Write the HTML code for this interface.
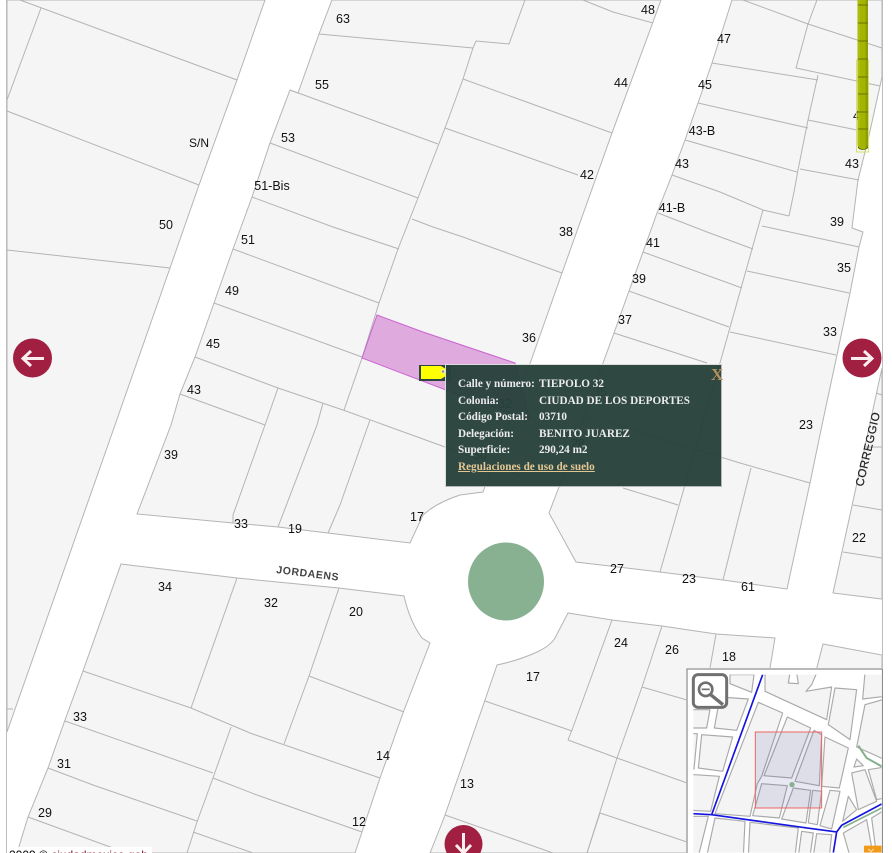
<!DOCTYPE html>
<html lang="es">
<head>
<meta charset="utf-8">
<title>Mapa</title>
<style>
html,body{margin:0;padding:0;background:#fff;width:892px;height:853px;overflow:hidden}
#wrap{position:relative;width:892px;height:853px;overflow:hidden;font-family:"Liberation Sans",sans-serif;filter:blur(.3px)}
svg{position:absolute;left:0;top:0}
.p{fill:#f5f5f5;stroke:#b4b4b4;stroke-width:1}
.l{fill:none;stroke:#b4b4b4;stroke-width:1}
.n{font:12.5px "Liberation Sans",sans-serif;fill:#111;text-anchor:middle}
#panel{position:absolute;left:446px;top:365px;width:275px;height:121px;background:#27413b;border:1px solid #b5b5b5;border-left-color:#ddd;border-top-color:#ddd;opacity:.96;box-sizing:content-box;margin:-1px 0 0 -1px;font:bold 11.2px/16.6px "Liberation Serif",serif;color:#ececec}
#panel div.r{position:absolute;left:12px;white-space:nowrap}
#panel div.v{position:absolute;left:93px;white-space:nowrap}
#panel a{position:absolute;left:12px;top:94px;color:#e2c690;text-decoration:underline;white-space:nowrap}
#x{position:absolute;left:265px;top:1px;font:bold 17px/17px "Liberation Serif",serif;color:#b18d56}
#copy{position:absolute;left:7px;top:847px;width:145px;height:6px;background:#fff;overflow:hidden;font:12px/12px "Liberation Sans",sans-serif;color:#000;white-space:nowrap}
#copy span{position:relative;top:2px;left:2px}
#copy i{font-style:normal;color:#7a0f20}
</style>
</head>
<body>
<div id="wrap">
<svg width="892" height="853" viewBox="0 0 892 853">
<rect x="0" y="0" width="892" height="853" fill="#fff"/>
<!-- block A -->
<polygon class="p" points="7,0 265,0 237,80 199,185 170,268 115,425 7,732"/>
<polyline class="l" points="20,0 237,80"/>
<polyline class="l" points="41,8 7,100"/>
<polyline class="l" points="7,111 199,185"/>
<polyline class="l" points="7,250 170,268"/>
<polyline class="l" points="7,709 13,709"/>
<!-- block B -->
<path class="p" d="M332,0 L319,34 298,93 290,90 270,143 252,197 233,249 214,303 195,357 180,394 171,425 137,514 233,523 278,527 328,533 410,543 423,515 Q436,503 460,495 L483,492 532,358 562,273 612,133 653,22 661,0Z"/>
<polyline class="l" points="319,34 473,48"/>
<polyline class="l" points="476,41 509,44 525,0"/>
<polyline class="l" points="473,48 476,41"/>
<polyline class="l" points="583,0 613,12 653,23"/>
<polyline class="l" points="473,48 463,79 445,128 418,198 398,249 379,303 362,358 344,410"/>
<polyline class="l" points="290,90 438,144"/>
<polyline class="l" points="270,143 418,198"/>
<polyline class="l" points="252,197 333,227 399,249"/>
<polyline class="l" points="233,249 379,303"/>
<polyline class="l" points="214,303 362,357"/>
<polyline class="l" points="195,357 278,388 343,410 445,447 530,479"/>
<polyline class="l" points="180,394 265,425"/>
<polyline class="l" points="278,388 265,425 233,515 233,523"/>
<polyline class="l" points="323,403 317,425 278,527"/>
<polyline class="l" points="370,420 340,505 328,533"/>
<polyline class="l" points="412,219 433,227 463,237 562,273"/>
<polyline class="l" points="445,128 578,175"/>
<polyline class="l" points="463,79 557,113 612,133"/>
<!-- block C -->
<polygon class="p" points="732,0 712,63 698,103 685,140 672,175 657,213 643,252 629,291 614,333 603,363 559,487 549,513 576,562 660,572 723,580 787,589 810,483 822,425 837,355 850,293 859,247 863,232 852,228 858,180 868,140 880,86 882,77 882,0"/>
<polyline class="l" points="743,0 808,24 882,48"/>
<polyline class="l" points="817,0 808,24 796,68 880,86"/>
<polyline class="l" points="712,63 818,80"/>
<polyline class="l" points="818,75 808,120 798,170 794,192 789,216"/>
<polyline class="l" points="698,103 808,128"/>
<polyline class="l" points="808,120 857,130"/>
<polyline class="l" points="685,140 797,172"/>
<polyline class="l" points="800,169 859,180"/>
<polyline class="l" points="672,175 720,192 763,210 789,216"/>
<polyline class="l" points="763,210 720,363 660,572"/>
<polyline class="l" points="762,226 859,247"/>
<polyline class="l" points="658,213 707,232 753,249"/>
<polyline class="l" points="643,252 742,288"/>
<polyline class="l" points="747,271 849,293"/>
<polyline class="l" points="629,291 729,327"/>
<polyline class="l" points="730,332 836,355"/>
<polyline class="l" points="614,333 707,363"/>
<polyline class="l" points="751,468 723,580"/>
<polyline class="l" points="583,415 740,463 810,483"/>
<polyline class="l" points="623,488 678,505"/>
<!-- far right -->
<polygon class="p" points="882,368 833,593 882,599"/>
<polyline class="l" points="876,393 882,395"/>
<polyline class="l" points="865,447 882,447"/>
<polyline class="l" points="853,505 882,510"/>
<polyline class="l" points="843,552 882,558"/>
<polygon class="p" points="823,644 882,655 882,675 815,675"/>
<!-- block D -->
<path class="p" d="M121,564 L237,578 339,588 404,596 Q410,622 422,638 L430,643 403,713 380,778 362,832 355,853 17,853 28,817 48,768 65,720 83,671Z"/>
<polyline class="l" points="237,578 191,708"/>
<polyline class="l" points="339,588 309,676 284,744"/>
<polyline class="l" points="309,676 404,712"/>
<polyline class="l" points="83,671 191,708 250,733 380,778"/>
<polyline class="l" points="65,721 213,773"/>
<polyline class="l" points="231,727 213,778 197,822 187,853"/>
<polyline class="l" points="213,778 257,795 362,832"/>
<polyline class="l" points="48,768 93,785 197,821"/>
<polyline class="l" points="28,817 113,848 125,853"/>
<polyline class="l" points="193,832 253,853"/>
<!-- block E -->
<path class="p" d="M568,613 L612,620 662,626 716,634 775,638 770,668 770,853 430,853 440,828 445,815 485,700 497,665 Q520,660 537,652 Q550,646 555,638Z"/>
<polyline class="l" points="612,620 572,730 568,740"/>
<polyline class="l" points="662,626 642,687 617,758 587,853"/>
<polyline class="l" points="716,634 710,668"/>
<polyline class="l" points="642,687 687,700"/>
<polyline class="l" points="485,701 572,731"/>
<polyline class="l" points="568,740 617,758 687,783"/>
<polyline class="l" points="445,815 553,853"/>
<polyline class="l" points="600,813 687,842"/>
<polyline class="l" points="600,813 587,853"/>
<!-- selected parcel -->
<polygon points="377,315 423,332 515,363 530,420 446,390 362,358" fill="#dfaadd" stroke="#c963d2" stroke-width="1"/>
<!-- roundabout -->
<ellipse cx="506" cy="581.5" rx="38" ry="39" fill="#87b191"/>
<!-- labels -->
<g class="n">
<text x="343" y="23">63</text><text x="648" y="14">48</text><text x="724" y="43">47</text>
<text x="621" y="87">44</text><text x="705" y="89">45</text><text x="322" y="89">55</text>
<text x="288" y="142">53</text><text x="199" y="147" style="font-size:12px">S/N</text><text x="702" y="135">43-B</text>
<text x="682" y="168">43</text><text x="852" y="168">43</text><text x="587" y="179">42</text>
<text x="272" y="190">51-Bis</text><text x="672" y="212">41-B</text><text x="166" y="229">50</text>
<text x="566" y="236">38</text><text x="837" y="226">39</text><text x="248" y="244">51</text>
<text x="653" y="247">41</text><text x="844" y="272">35</text><text x="639" y="283">39</text>
<text x="232" y="295">49</text><text x="625" y="324">37</text><text x="529" y="342">36</text>
<text x="830" y="336">33</text><text x="213" y="348">45</text><text x="194" y="394">43</text>
<text x="806" y="429">23</text><text x="171" y="459">39</text><text x="417" y="521">17</text>
<text x="241" y="528">33</text><text x="295" y="533">19</text><text x="859" y="542">22</text>
<text x="617" y="573">27</text><text x="689" y="583">23</text><text x="748" y="591">61</text>
<text x="165" y="591">34</text><text x="271" y="607">32</text><text x="356" y="616">20</text>
<text x="621" y="647">24</text><text x="672" y="654">26</text><text x="729" y="661">18</text>
<text x="533" y="681">17</text><text x="80" y="721">33</text><text x="383" y="760">14</text>
<text x="64" y="768">31</text><text x="467" y="788">13</text><text x="45" y="817">29</text>
<text x="359" y="826">12</text><text x="860" y="120">43</text>
<text x="505" y="408">32</text><text x="600" y="396">35</text><text x="480" y="459">30</text><text x="578" y="448">28</text>
</g>
<text transform="translate(276,573) rotate(7)" style="font:bold 10.5px 'Liberation Sans',sans-serif;fill:#444;letter-spacing:.6px">JORDAENS</text>
<text transform="translate(863,487) rotate(-77)" style="font:11.5px 'Liberation Sans',sans-serif;fill:#222;letter-spacing:.5px;stroke:#222;stroke-width:.2">CORREGGIO</text>
<!-- border lines -->
<line x1="6.5" y1="0" x2="6.5" y2="853" stroke="#bdbdbd"/>
<line x1="882.5" y1="0" x2="882.5" y2="853" stroke="#bdbdbd"/>
<!-- yellow bar -->
<rect x="856.5" y="60" width="12" height="92" fill="none" stroke="#cfe04a" stroke-width=".8"/>
<path d="M857.5 0H868V144Q868 150 862.700 150Q857.5 150 857.5 144Z" fill="#a3b500"/>
<rect x="858" y="0" width="2" height="148" fill="#aebd14"/>
<rect x="865.5" y="0" width="2.5" height="148" fill="#8d9e06"/>
<path d="M858 5H868M858 23H868M858 41H868M858 59H868M858 77H868M858 94H868M858 112H868M858 129H868" stroke="#66720a" stroke-width="1"/>
<path d="M858 146Q862.700 153 868 146V148Q862.700 152 858 148Z" fill="#5f6b00"/>
<!-- nav buttons -->
<g>
<circle cx="32.5" cy="358" r="19.5" fill="#a11f40"/>
<path d="M44 358.5H24M31 351L23 358.5L31 366" fill="none" stroke="#fbeef0" stroke-width="3"/>
<circle cx="862" cy="358" r="19.5" fill="#a11f40"/>
<path d="M851 358.5H871M864 351L872 358.5L864 366" fill="none" stroke="#fbeef0" stroke-width="3"/>
<circle cx="463.5" cy="844" r="19" fill="#a11f40"/>
<path d="M463.5 833V853M456 845L463.5 853L471 845" fill="none" stroke="#fbeef0" stroke-width="3"/>
</g>
<!-- tag -->
<rect x="419" y="365" width="32" height="16" fill="#2b4640"/>
<path d="M421 366H441L446 369V376L441 379H421Z" fill="#ffff00"/>
<circle cx="443" cy="371.5" r="1.6" fill="#889" stroke="#fff" stroke-width=".6"/>
</svg>

<div id="panel">
<div class="r" style="top:11px">Calle y número:</div><div class="v" style="top:11px">TIEPOLO 32</div>
<div class="r" style="top:27.5px">Colonia:</div><div class="v" style="top:27.5px">CIUDAD DE LOS DEPORTES</div>
<div class="r" style="top:44px">Código Postal:</div><div class="v" style="top:44px">03710</div>
<div class="r" style="top:61px">Delegación:</div><div class="v" style="top:61px">BENITO JUAREZ</div>
<div class="r" style="top:77px">Superficie:</div><div class="v" style="top:77px">290,24 m2</div>
<a>Regulaciones de uso de suelo</a>
<div id="x">X</div>
</div>

<div id="copy"><span>2009 © <i>ciudadmexico.gob.mx</i></span></div>

<!-- minimap -->
<svg width="197" height="185" viewBox="0 0 197 185" style="left:686px;top:668px">
<rect x="0" y="0" width="197" height="185" fill="#fff"/>
<rect x="1" y="1" width="195.500" height="190" fill="none" stroke="#8a8a8a" stroke-width="1.200"/>
<g transform="translate(-6,-8.330) scale(.3333)">
<clipPath id="mc"><rect x="40" y="45" width="565" height="534"/></clipPath>
<g clip-path="url(#mc)">
<rect x="40" y="45" width="565" height="534" fill="#fff"/>
<g fill="#f4f4f4" stroke="#aaa" stroke-width="3.500" stroke-linejoin="round">
<polygon points="150,45 222,45 215,98 150,72"/>
<polygon points="120,112 205,118 170,212 103,205"/>
<polygon points="65,225 158,232 128,335 55,325"/>
<polygon points="30,150 90,150 80,205 30,205"/>
<polygon points="30,222 52,222 42,328 30,328"/>
<polygon points="45,345 118,350 92,455 30,452 30,345"/>
<polygon points="235,128 308,160 245,350 232,372 210,470 105,462"/>
<polygon points="322,172 392,205 335,355 252,348"/>
<polygon points="402,212 425,225 418,378 345,365"/>
<polygon points="435,232 505,265 478,385 425,380"/>
<polygon points="245,372 322,378 298,475 218,468"/>
<polygon points="340,385 392,392 378,490 305,478"/>
<polygon points="398,392 425,395 412,495 385,490"/>
<polygon points="450,392 480,395 455,508 420,498"/>
<polygon points="30,470 85,470 55,590 30,590"/>
<polygon points="105,475 195,485 190,590 80,590"/>
<polygon points="210,488 355,505 345,590 205,590"/>
<polygon points="365,515 400,520 390,590 355,590"/>
<polygon points="410,522 455,525 448,590 400,590"/>
<polygon points="255,40 330,40 325,70 355,72 350,40 410,40 395,75 378,95 455,82 440,180 255,95"/>
<polygon points="465,85 530,90 510,240 445,195"/>
<polygon points="555,40 615,40 615,110 548,118"/>
<polygon points="555,135 615,118 615,300 530,262"/>
<polygon points="530,298 550,318 522,322"/>
<polygon points="515,340 555,330 590,425 535,450"/>
<polygon points="505,410 530,450 488,485"/>
<polygon points="565,330 615,322 615,415 590,420"/>
<polygon points="490,520 560,480 580,590 510,590"/>
<polygon points="575,475 615,450 615,590 590,590"/>
</g>
<path d="M535 258L560 295L605 320" fill="none" stroke="#86b08c" stroke-width="6"/>
<path d="M490 503L605 445" fill="none" stroke="#86b08c" stroke-width="5"/>
<path d="M248 45L95 465M40 462L95 465L380 505L470 517L460 579M470 517L485 497L605 433" fill="none" stroke="#1515e0" stroke-width="5"/>
<rect x="226" y="217" width="199" height="228" fill="#5c5ca0" fill-opacity=".14" stroke="#f06464" stroke-width="3"/>
<circle cx="336" cy="375" r="8" fill="#87b191"/>
<rect x="552" y="558" width="53" height="21" fill="#f09a17"/>
<path d="M565 568l8 8 8-8" fill="none" stroke="#fbe0b0" stroke-width="3"/>
</g>
<rect x="40" y="45" width="100" height="98" rx="14" fill="#fff" fill-opacity=".9" stroke="#707070" stroke-width="9"/>
<circle cx="77" cy="89" r="20" fill="none" stroke="#707070" stroke-width="8"/>
<path d="M65 89H89" stroke="#707070" stroke-width="5"/>
<path d="M92 105L129 135" stroke="#707070" stroke-width="10"/>
</g>
</svg>
</div>
</body>
</html>
